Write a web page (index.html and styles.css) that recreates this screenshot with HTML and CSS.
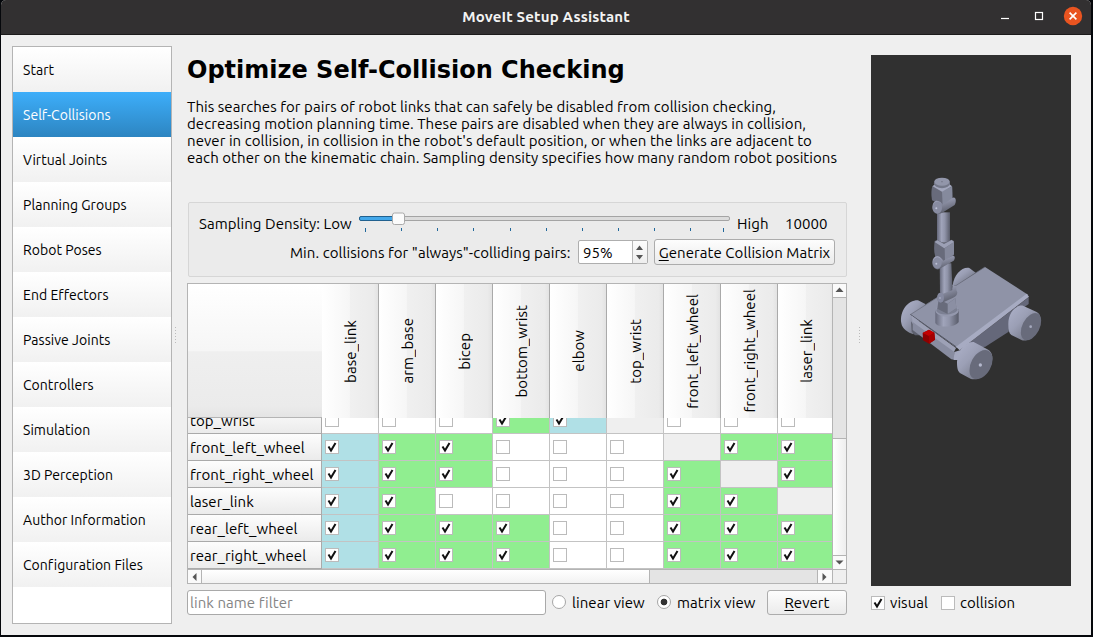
FILE: index.html
```
<!DOCTYPE html>
<html lang="en">
<head>
<meta charset="utf-8">
<title>MoveIt Setup Assistant</title>
<link rel="stylesheet" href="styles.css">
</head>
<body>
<div class="window">
  <header class="titlebar">
    <span class="title">MoveIt Setup Assistant</span>
    <div class="controls">
      <svg width="82" height="20" viewBox="0 0 82 20">
        <path d="M0 12.5h8" stroke="#fff" stroke-width="1.2"/>
        <rect x="34.5" y="6.5" width="7" height="7" fill="none" stroke="#fff" stroke-width="1.2"/>
        <circle cx="72" cy="10" r="9.2" fill="#e95420"/>
        <path d="M68.6 6.6l6.8 6.8M75.4 6.6l-6.8 6.8" stroke="#fff" stroke-width="1.6"/>
      </svg>
    </div>
  </header>
  <div class="content">
    <nav class="sidebar">
      <div class="item">Start</div>
      <div class="item active">Self-Collisions</div>
      <div class="item">Virtual Joints</div>
      <div class="item">Planning Groups</div>
      <div class="item">Robot Poses</div>
      <div class="item">End Effectors</div>
      <div class="item">Passive Joints</div>
      <div class="item">Controllers</div>
      <div class="item">Simulation</div>
      <div class="item">3D Perception</div>
      <div class="item">Author Information</div>
      <div class="item">Configuration Files</div>
    </nav>
    <div class="splitter"></div>
    <main class="main">
      <h1>Optimize Self-Collision Checking</h1>
      <p class="intro">This searches for pairs of robot links that can safely be disabled from collision checking,<br>decreasing motion planning time. These pairs are disabled when they are always in collision,<br>never in collision, in collision in the robot's default position, or when the links are adjacent to<br>each other on the kinematic chain. Sampling density specifies how many random robot positions</p>
      <section class="group">
        <div class="line1">
          <span class="lbl">Sampling Density: Low</span>
          <svg class="slider" width="372" height="26" viewBox="0 0 372 26">
            <rect x=".5" y="5.5" width="370" height="4" rx="1.5" fill="#dcdcdc" stroke="#a4a4a4"/>
            <rect x=".5" y="5.5" width="36" height="4" rx="1.5" fill="#43a8ea" stroke="#21618f"/>
            <path d="M6.5 17v4M42.5 17v3M78.5 17v3M114.5 17v3M151.500 17v3M187.500 17v3M223.500 17v3M259.500 17v3M295.500 17v3M331.500 17v3M364.500 17v4" stroke="#21689b"/>
            <rect x="33.500" y="2" width="12" height="11.500" rx="2" fill="#fbfbfb" stroke="#aaa"/>
          </svg>
          <span class="lbl high">High</span><span class="lbl num">10000</span>
        </div>
        <div class="line2">
          <span class="lbl min">Min. collisions for "always"-colliding pairs:</span>
          <div class="spin"><span>95%</span><svg width="14" height="22" viewBox="0 0 14 22"><path d="M3 9l3.500-4.500L10 9zM3 14h7l-3.500 4.500z" fill="#555"/></svg></div>
          <button class="btn gen"><u>G</u>enerate Collision Matrix</button>
        </div>
      </section>
      <section class="table">
        <div class="view">
          <div class="heads" id="heads"><div class="corner"></div></div>
          <div class="clip"><div class="rows" id="rows"></div></div>
        </div>
        <div class="vbar">
          <div class="cap"><svg width="13" height="12"><path d="M2.500 8l4-4.500 4 4.500z" fill="#555"/></svg></div>
          <div class="vgroove"></div><div class="vthumb"></div>
          <div class="cap end"><svg width="13" height="12"><path d="M2.500 4.500h8l-4 4z" fill="#555"/></svg></div>
        </div>
        <div class="hbar">
          <div class="hcap"><svg width="13" height="13"><path d="M8.500 3v8l-4-4z" fill="#555"/></svg></div>
          <div class="hthumb"></div><div class="hgroove"></div>
          <div class="hcap right"><svg width="13" height="13"><path d="M4.500 3v8l4-4z" fill="#555"/></svg></div>
        </div>
        <div class="sizegrip"></div>
      </section>
      <div class="bottom">
        <div class="filter">link name filter</div>
        <span class="radio"></span><span class="lbl lin">linear view</span>
        <span class="radio on"></span><span class="lbl mat">matrix view</span>
        <button class="btn revert"><u>R</u>evert</button>
      </div>
    </main>
    <div class="splitter second"></div>
    <aside class="preview">
      <svg class="scene" width="200" height="531" viewBox="0 0 200 531">
        <defs>
          <linearGradient id="cyl"><stop offset="0" stop-color="#65687a"/><stop offset=".35" stop-color="#a0a4ba"/><stop offset=".6" stop-color="#9094a9"/><stop offset="1" stop-color="#595c6a"/></linearGradient>
          <linearGradient id="tyre" x1="0" y1="0" x2="1" y2="1"><stop offset="0" stop-color="#aeb2ca"/><stop offset=".4" stop-color="#9b9fb5"/><stop offset="1" stop-color="#60636f"/></linearGradient>
          <linearGradient id="jnt" x1="0" y1="0" x2=".4" y2="1"><stop offset="0" stop-color="#b0b4cd"/><stop offset="1" stop-color="#5d606e"/></linearGradient>
        </defs>
        <g transform="translate(-11 105) scale(.33333)">
          <path d="M278 376C282 344 306 320 328 324L347 338 290 376z" fill="url(#tyre)"/>
          <path d="M124 490C118 452 145 420 174 421L196 432 160 523C145 519 126 506 124 490z" fill="url(#tyre)"/>
          <path d="M153 484L182 526 165 526 155 515z" fill="#5d606e"/>
          <path d="M300 570L506 412V432L452 470 446 515 376 560z" fill="#65687a"/>
          <path d="M151 463L375 321 505 405 290 563z" fill="#8f93a7"/>
          <path d="M151 463L288 560" stroke="#555866" stroke-width="3" fill="none"/>
          <path d="M151 464L375 321" stroke="#666a79" stroke-width="2" fill="none"/>
          <path d="M288 560L500 401 507 410 299 571z" fill="#a7abc2"/>
          <path d="M155 467L288 564 281 578 158 490z" fill="#9da1b6"/>
          <path d="M158 486L283 576V599L274 598 158 510z" fill="#888ca0"/>
          <path d="M283 576L302 570 294 600 281 600z" fill="#a4a8bf"/>
          <path d="M445 494C444 455 470 434 489 437L530 456C546 463 544 489 532 510C518 534 500 545 486 541L454 525C447 520 445 510 445 494z" fill="url(#tyre)"/>
          <ellipse cx="513" cy="500" rx="26" ry="44" transform="rotate(27 513 500)" fill="#686b7b"/>
          <circle cx="512" cy="500" r="4" fill="#a5a9bd"/>
          <path d="M291 606C292 567 320 545 341 546L382 568C400 577 402 600 389 624C374 650 351 662 333 657L301 640C293 634 291 624 291 606z" fill="url(#tyre)"/>
          <ellipse cx="363" cy="614" rx="30" ry="47" transform="rotate(29 363 614)" fill="#686b7b"/>
          <circle cx="361" cy="615" r="5" fill="#b4b8cd"/>
          <path d="M226 449V488C231 504 286 504 296 486V448z" fill="url(#cyl)"/>
          <ellipse cx="261" cy="451" rx="35" ry="19" fill="#9498ad"/>
          <path d="M229 453C232 437 241 439 263 454C282 439 291 441 293 450C283 466 239 469 229 453z" fill="#7c8093"/>
          <path d="M236 418L263 431 286 415 289 445 263 462 232 446z" fill="#686b7b"/>
          <path d="M263 431L286 415 289 445 263 462z" fill="#8b8fa3"/>
          <path d="M239 310H274L278 398C267 408 244 405 240 397z" fill="url(#cyl)"/>
          <path d="M277 374L289 377V390L292 397C291 408 286 410 278 414L250 427C238 432 230 424 232 409C233 400 240 394 249 401L278 390z" fill="url(#jnt)"/>
          <ellipse cx="242" cy="413" rx="10" ry="15" fill="#8589a0"/><circle cx="240" cy="414" r="2.500" fill="#b7bbd0"/>
          <path d="M231 157H270V248H231z" fill="url(#cyl)"/>
          <path d="M224 243L232 240 252 250 274 239 282 243V285L255 306 226 290C221 274 222 258 224 243z" fill="#686b7b"/>
          <path d="M254 265L282 246V283L255 302z" fill="#85899c"/>
          <path d="M224 246L253 265 282 246 275 240 252 252 232 241z" fill="#9ca0b5"/>
          <path d="M232 289C239 287 246 297 250 302L276 288C285 284 287 295 281 302L242 325C231 334 216 323 217 306C218 295 224 289 232 289z" fill="url(#jnt)"/>
          <ellipse cx="232" cy="309" rx="13" ry="17" fill="#888ca1"/><circle cx="229" cy="311" r="3" fill="#bdc1d6"/>
          <path d="M217 79L227 72 263 71 277 80 278 119 248 137 216 121C213 103 214 89 217 79z" fill="#686b7b"/>
          <path d="M246 94L276 80 277 118 248 137z" fill="#858a9d"/>
          <path d="M218 79L246 95 276 79 264 69 228 70z" fill="#a3a7bd"/>
          <ellipse cx="246" cy="70" rx="24" ry="15" fill="#747889"/><ellipse cx="246" cy="65" rx="23" ry="12" fill="#9296aa"/><circle cx="246" cy="65" r="2" fill="#6a6d7c"/>
          <path d="M231 122C239 122 245 129 249 134L276 115C287 106 291 124 284 135L247 158C234 166 216 158 217 141C218 129 223 122 231 122z" fill="url(#jnt)"/>
          <ellipse cx="232" cy="143" rx="14" ry="18" fill="#888ca1"/><circle cx="229" cy="145" r="3" fill="#c0c4da"/>
          <path d="M188 519L207 509 223 518 225 539 207 551 189 541z" fill="#8d0000"/><path d="M188 519L207 509 223 518 207 528z" fill="#c20000"/><path d="M207 528L223 518 225 539 207 551z" fill="#a50000"/>
        </g>
      </svg>
      <div class="checks"><span class="box on"></span><span class="lbl vis">visual</span><span class="box"></span><span class="lbl">collision</span></div>
    </aside>
  </div>
</div>
<script src="matrix.js"></script>
</body>
</html>
```
FILE: styles.css
```
* { box-sizing: border-box; }
body { margin: 0; width: 1093px; height: 637px; padding: 0 2px 2px 1px; background: #05070b; overflow: hidden;
  font: 15px/17px Ubuntu, "Noto Sans", sans-serif; letter-spacing: .06px; color: #000; }
svg { display: block; flex: none; }
.window { height: 635px; background: #efefef; border-radius: 5px 5px 0 0; overflow: hidden; }
.titlebar { height: 35px; background: #323031; border-bottom: 1px solid #1c1b1b; display: flex; align-items: center; position: relative; }
.title { flex: 1; text-align: center; color: #f3f3f3; font-weight: bold; letter-spacing: .17px; line-height: 34px; padding: 0 0 1px; }
.controls { position: absolute; right: 8px; top: 6px; }
.content { display: flex; height: 600px; padding-left: 11px; }
.sidebar { width: 160px; height: 578px; margin-top: 11px; border: 1px solid #b4b4b4; background: #fff; font-size: 14px; letter-spacing: .04px; }
.item { height: 45px; line-height: 47px; padding-left: 10px; white-space: nowrap; background: linear-gradient(#fff, #f1f1f1); }
.item.active { background: linear-gradient(#3daefa, #2d85c1); color: #fff; }
.splitter { width: 15px; height: 18px; margin-top: 292px; background: repeating-linear-gradient(#bbb 0 1px, transparent 1px 3px) 3px 0 / 1px 18px no-repeat; }
.splitter.second { width: 24px; background-position: 12px 0; }
.main { width: 660px; padding-top: 19px; }
h1 { margin: 0; font: bold 24px/32px "DejaVu Sans", sans-serif; letter-spacing: 0; white-space: nowrap; }
.intro { margin: 12px 0 0; height: 69px; white-space: nowrap; }
.group { margin: 35px 0 0 1px; width: 659px; height: 75px; border: 1px solid #d6d6d6; border-radius: 2px; background: #ebebeb; padding-left: 10px; }
.line1, .line2 { display: flex; align-items: flex-start; white-space: nowrap; }
.line1 { height: 35px; padding-top: 8px; }
.line1 .lbl { line-height: 26px; width: 160px; }
.line1 .high { width: 48px; margin-left: 6px; }
.line1 .num { width: 60px; }
.line2 { padding-left: 91px; }
.line2 .min { width: 288px; line-height: 29px; }
.spin { width: 70px; height: 24px; margin-top: 2px; border: 1px solid #aeaeae; border-radius: 2px; background: #fff; display: flex; line-height: 24px; }
.spin span { width: 54px; padding-left: 4px; border-right: 1px solid #b8b8b8; }
.spin svg { width: 14px; background: linear-gradient(#fdfdfd, #eee); }
.btn { margin: 0; padding: 0; border: 1px solid #acacac; border-radius: 3px; background: linear-gradient(#fdfdfd, #ebebeb); font: inherit; letter-spacing: .06px; color: #000; text-align: center; white-space: nowrap; }
.btn u { text-underline-offset: 2px; }
.gen { width: 181px; height: 26px; margin: 1px 0 0 6px; }
.table { width: 660px; height: 301px; margin-top: 6px; border: 1px solid #b4b4b4; display: grid; grid-template-columns: 644px 14px; grid-template-rows: 285px 14px; background: #fff; }
.view { overflow: hidden; }
.heads { display: flex; height: 134px; }
.corner { flex: none; width: 134px; height: 134px; background: linear-gradient(#fff, #f6f6f6 50%, #efefef 51%, #ebebeb 92%, #e4e4e4); border-bottom: 1px solid #b4b4b4; }
.head { flex: none; width: 57px; height: 134px; border-right: 1px solid #aaa; background: linear-gradient(90deg, #fff, #f6f6f6 49%, #f0f0f0 50%, #ebebeb 92%, #e3e3e3); display: flex; align-items: center; justify-content: center; }
.head span { writing-mode: vertical-rl; transform: rotate(180deg); white-space: nowrap; padding-right: 1px; }
.clip { height: 151px; overflow: hidden; display: flex; align-items: flex-end; }
.rows { flex: none; }
.row { display: flex; height: 27px; }
.name { flex: none; width: 134px; border: solid #aaa; border-width: 0 1px 1px 0; padding-left: 2px; line-height: 28px; white-space: nowrap; background: linear-gradient(#fdfdfd, #ebebeb); }
.cell { flex: none; width: 57px; border: solid #c3c3c3; border-width: 0 1px 1px 0; padding: 6px 0 0 3px; }
.g { background: #90ee90; }
.b { background: #b0e0e6; }
.n { background: #efefef; }
.box { display: block; flex: none; width: 14px; height: 14px; border: 1px solid #bbb; background: #fff; }
.box path { fill: none; stroke: #111; stroke-width: 2; }
.vbar { border-left: 1px solid #b4b4b4; display: flex; flex-direction: column; background: #fafafa; }
.cap { height: 14px; border-bottom: 1px solid #b4b4b4; }
.cap.end { border: 0; height: 13px; }
.vgroove { height: 141px; background: #e4e4e4; border-bottom: 1px solid #b4b4b4; }
.vthumb { height: 117px; background: linear-gradient(90deg, #fff, #eee); border-bottom: 1px solid #b4b4b4; }
.hbar { border-top: 1px solid #b4b4b4; display: flex; background: #fafafa; }
.hcap { width: 14px; border-right: 1px solid #b4b4b4; }
.hcap.right { border: 0; }
.hthumb { width: 449px; background: linear-gradient(#fff, #f2f2f2); border-right: 1px solid #b4b4b4; }
.hgroove { width: 168px; background: #e4e4e4; border-right: 1px solid #b4b4b4; }
.sizegrip { border: solid #b4b4b4; border-width: 1px 0 0 1px; background: #efefef; }
.bottom { display: flex; align-items: center; height: 25px; margin-top: 6px; white-space: nowrap; }
.filter { width: 359px; height: 25px; border: 1px solid #a9a9a9; border-radius: 3px; background: #fff; color: #858585; line-height: 24px; padding-left: 2px; }
.radio { width: 14px; height: 14px; margin: 0 6px 1px 6px; border: 1px solid #a6a6a6; border-radius: 50%; background: #fff; }
.radio.on { background: radial-gradient(circle, #333 3px, #fff 3.7px); }
.lin { width: 79px; }
.mat { width: 83px; }
.radio + .lbl { line-height: 25px; }
.revert { width: 80px; height: 25px; margin-left: 7px; }
.preview { width: 200px; padding-top: 20px; }
.scene { background: #303030; }
.checks { display: flex; align-items: center; height: 14px; margin-top: 10px; line-height: 18px; }
.checks .lbl { margin-left: 5px; }
.checks .vis { width: 51px; }
```
FILE: matrix.js
```
const links = ["base_link", "arm_base", "bicep", "bottom_wrist", "elbow", "top_wrist", "front_left_wheel", "front_right_wheel", "laser_link"];
// g = never/default disabled, b = adjacent, w = enabled, n = diagonal
const rows = [
  ["top_wrist", "wwwgbnwww"],
  ["front_left_wheel", "bggwwwngg"],
  ["front_right_wheel", "bggwwwgng"],
  ["laser_link", "bgwwwwggn"],
  ["rear_left_wheel", "bgggwwggg"],
  ["rear_right_wheel", "bgggwwggg"]
];
const tick = '<svg width="12" height="12"><path d="M2.500 5.500L5 9.500 9.500 2"/></svg>';
for (const name of links) {
  document.getElementById("heads").insertAdjacentHTML("beforeend", `<div class="head"><span>${name}</span></div>`);
}
document.getElementById("rows").innerHTML = rows.map(([name, cells]) =>
  `<div class="row"><div class="name">${name}</div>` +
  [...cells].map(c => `<div class="cell ${c}">${c === "n" ? "" : `<span class="box">${"gb".includes(c) ? tick : ""}</span>`}</div>`).join("") +
  "</div>").join("");
document.querySelectorAll(".box.on").forEach(b => { b.innerHTML = tick; });
```
